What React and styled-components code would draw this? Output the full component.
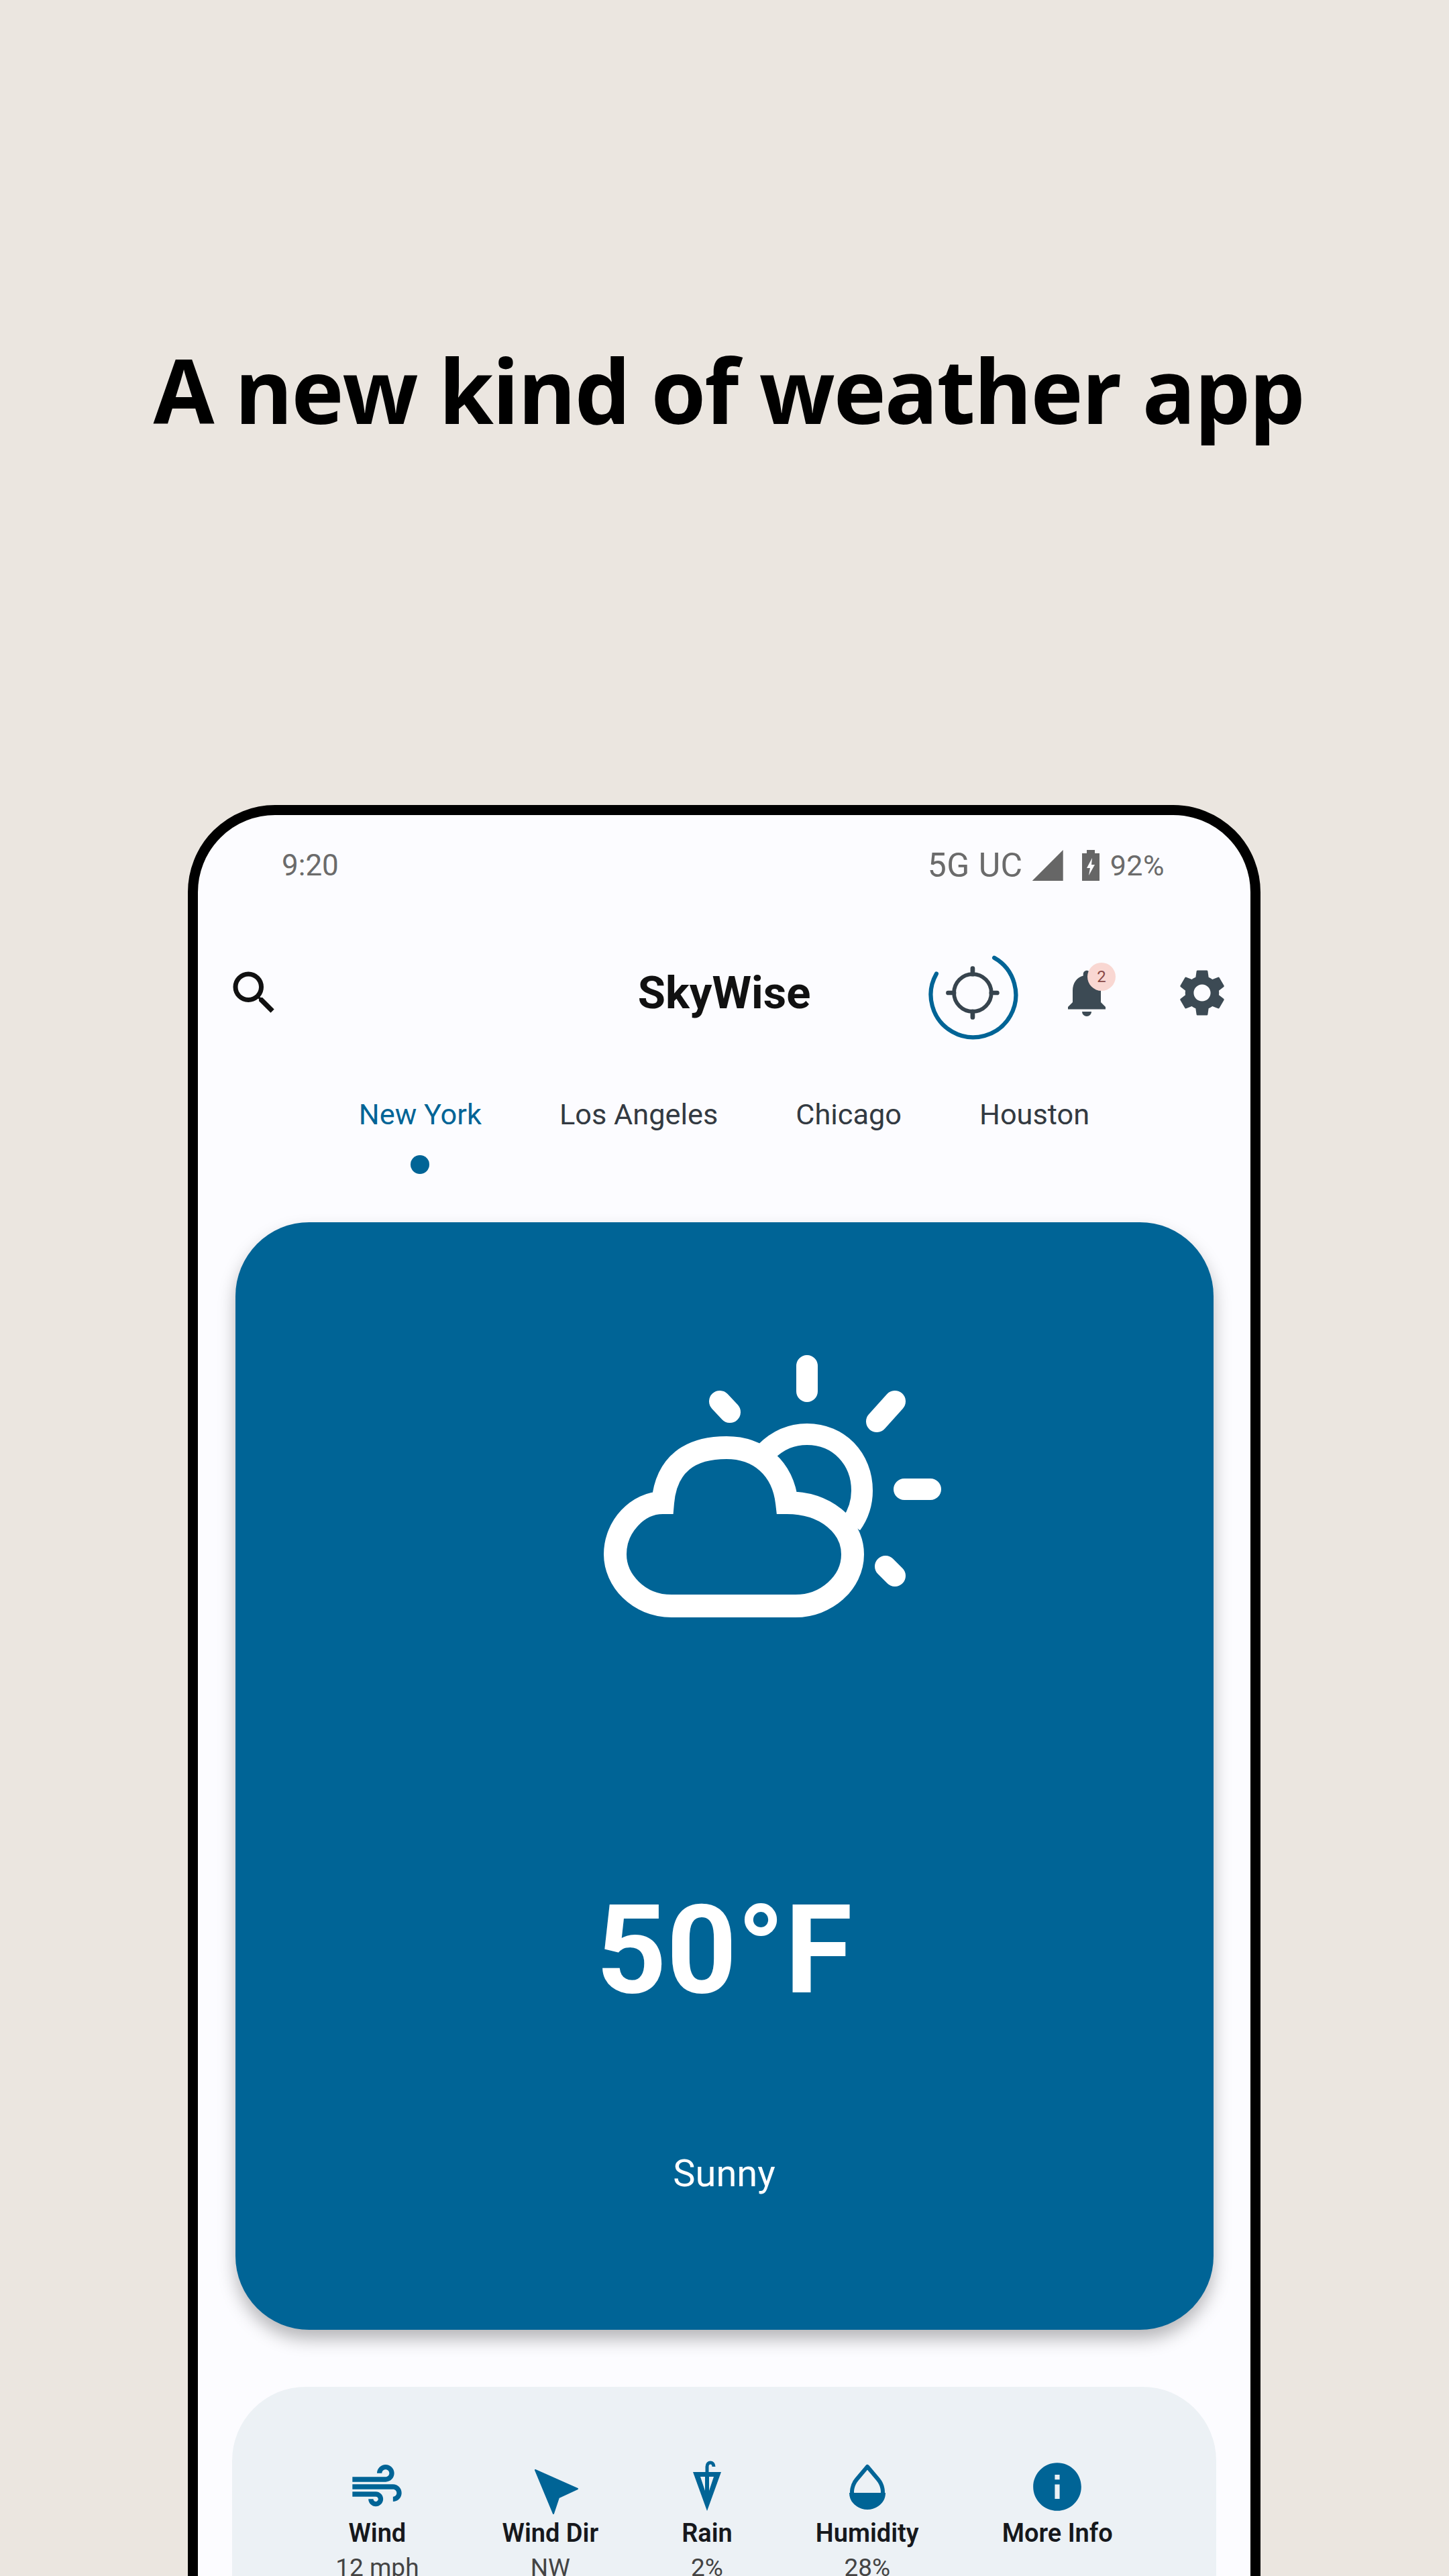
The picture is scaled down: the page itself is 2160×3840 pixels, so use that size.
import styled, { createGlobalStyle } from 'styled-components'
import { MdAir, MdInfo, MdNotifications, MdSearch, MdSettings } from 'react-icons/md'

const cities = ['New York', 'Los Angeles', 'Chicago', 'Houston']

const BLUE = '#006496'

const GlobalStyle = createGlobalStyle`
    html, body {
        margin: 0;
        padding: 0;
        background: #EBE6E0;
    }
`

const WindDirIcon = () => (
    <svg width="90" height="90" viewBox="0 0 90 90">
        <path d="M23 20 L86 48 L58 61 L50 85 Z" fill={BLUE} strokeLinejoin="round" stroke={BLUE} strokeWidth="2" />
    </svg>
)

const UmbrellaIcon = () => (
    <svg width="48" height="80" viewBox="0 0 48 80">
        <path d="M24 22 V10 C24 2 34 2 34 10" fill="none" stroke={BLUE} strokeWidth="5" />
        <path d="M3 18 L45 18 L24 76 Z" fill={BLUE} />
        <path d="M14 25 L21 25 L21 46 Z M27 25 L34 25 L27 46 Z" fill="#ECF1F5" />
    </svg>
)

const DropIcon = () => (
    <svg width="60" height="70" viewBox="0 0 60 70">
        <path d="M30 5 L46 24 C60 41 52 66 30 66 C8 66 0 41 14 24 Z" fill="none" stroke={BLUE} strokeWidth="6" strokeLinejoin="round" />
        <path d="M3 44 H57 C57 58 46 68 30 68 C14 68 3 58 3 44 Z" fill={BLUE} />
    </svg>
)

const BatteryIcon = () => (
    <svg width="30" height="46" viewBox="0 0 30 46">
        <path d="M9 0 H21 V5 H28 V46 H2 V5 H9 Z" fill="#666" />
        <path d="M17 12 L9 27 H14 L12 38 L21 22 H16 Z" fill="#FCFCFF" />
    </svg>
)

const SunCloud = () => (
    <svg width="640" height="480" viewBox="0 0 640 480" fill="none" stroke="#fff" strokeLinecap="round">
        <path d="M385 434 H200 C150 434 116 395 116 357 C116 315 150 280 187 280 C192 222 228 198 282 198 C330 198 366 228 372 280 C430 280 470 315 470 357 C470 400 430 434 385 434 Z" strokeWidth="34" strokeLinecap="butt" strokeLinejoin="miter" />
        <path d="M340 205 C360 185 380 178 402 178 C450 178 484 215 484 262 C484 280 478 298 468 312" strokeWidth="32" strokeLinecap="butt" />
        <path d="M402 76 V114 M272 129 L287 145 M533 129 L506 159 M547 260 H586 M519 375 L533 389" strokeWidth="32" />
    </svg>
)

const LocateRing = () => (
    <svg width="150" height="150" viewBox="0 0 150 150" fill="none">
        <path d="M20.7 45.4 A66 66 0 1 0 110.5 20.6" stroke={BLUE} strokeWidth="6.5" strokeLinecap="round" />
        <circle cx="77" cy="75" r="29" stroke="#37444E" strokeWidth="6" />
        <path d="M77 37 V46 M77 104 V113 M39 75 H48 M106 75 H115" stroke="#37444E" strokeWidth="7" strokeLinecap="round" />
    </svg>
)

const stats = [
    { icon: <MdAir size={88} color={BLUE} />, label: 'Wind', value: '12 mph' },
    { icon: <WindDirIcon />, label: 'Wind Dir', value: 'NW' },
    { icon: <UmbrellaIcon />, label: 'Rain', value: '2%' },
    { icon: <DropIcon />, label: 'Humidity', value: '28%' },
    { icon: <MdInfo size={86} color={BLUE} />, label: 'More Info' },
]

const App = () => {
    return (
        <Page>
            <GlobalStyle />
            <Heading>A new kind of weather app</Heading>
            <Phone>
                <StatusBar>
                    <Time>9:20</Time>
                    <StatusRight>
                        <Network>5G UC</Network>
                        <Signal />
                        <BatteryIcon />
                        <Percent>92%</Percent>
                    </StatusRight>
                </StatusBar>
                <TopBar>
                    <SearchSlot>
                        <MdSearch size={84} color="#111" />
                    </SearchSlot>
                    <Title>SkyWise</Title>
                    <Actions>
                        <ActionButton><LocateRing /></ActionButton>
                        <ActionButton>
                            <MdNotifications size={84} color="#3C4A54" />
                            <Badge>2</Badge>
                        </ActionButton>
                        <ActionButton><MdSettings size={84} color="#3C4A54" /></ActionButton>
                    </Actions>
                </TopBar>
                <Tabs>
                    {cities.map((city, i) => (
                        <Tab key={city} $active={i === 0}>{city}</Tab>
                    ))}
                </Tabs>
                <WeatherCard>
                    <WeatherIcon><SunCloud /></WeatherIcon>
                    <Temp>50°F</Temp>
                    <Condition>Sunny</Condition>
                </WeatherCard>
                <StatsPanel>
                    {stats.map((s) => (
                        <Stat key={s.label}>
                            <StatIcon>{s.icon}</StatIcon>
                            <StatLabel>{s.label}</StatLabel>
                            <StatValue>{s.value}</StatValue>
                        </Stat>
                    ))}
                </StatsPanel>
            </Phone>
        </Page>
    )
}

export default App

const Page = styled.div`
    height: 3840px;
    overflow: hidden;
    padding-top: 501px;
    box-sizing: border-box;
    background: #EBE6E0;
`

const Heading = styled.h1`
    margin: 0;
    font: 700 132px/160px "Open Sans", sans-serif;
    letter-spacing: -2px;
    color: #000;
    text-align: center;
    padding-left: 12px;
`

const Phone = styled.div`
    box-sizing: border-box;
    width: 1599px;
    height: 2800px;
    margin: 539px 0 0 280px;
    background: #FCFCFF;
    border: 15px solid #000;
    border-radius: 130px;
    font-family: Roboto, sans-serif;
`

const StatusBar = styled.div`
    height: 150px;
    padding: 0 128px 0 125px;
    display: flex;
    align-items: center;
    justify-content: space-between;
    color: #6B6B6B;
`

const Time = styled.span`
    font-size: 44px;
`

const StatusRight = styled.div`
    display: flex;
    align-items: center;
`

const Network = styled.span`
    font-size: 50px;
    letter-spacing: 0.5px;
    margin-right: 14px;
`

const Signal = styled.span`
    width: 46px;
    height: 46px;
    background: #666;
    clip-path: polygon(100% 0, 100% 100%, 0 100%);
    margin-right: 26px;
`

const Percent = styled.span`
    font-size: 43px;
    margin-left: 14px;
    letter-spacing: 0.5px;
`

const TopBar = styled.div`
    height: 230px;
    display: grid;
    grid-template-columns: 1fr auto 1fr;
    align-items: center;
`

const SearchSlot = styled.div`
    padding-left: 42px;
    display: flex;
`

const Title = styled.div`
    font-size: 67px;
    font-weight: 700;
    color: #111;
`

const Actions = styled.div`
    display: flex;
    justify-content: flex-end;
    gap: 28px;
`

const ActionButton = styled.div`
    position: relative;
    width: 144px;
    height: 150px;
    display: flex;
    align-items: center;
    justify-content: center;
`

const Badge = styled.span`
    position: absolute;
    top: 30px;
    left: 73px;
    width: 42px;
    height: 42px;
    border-radius: 50%;
    background: #F9D7D2;
    color: #8A4A48;
    font-size: 24px;
    line-height: 42px;
    text-align: center;
`

const Tabs = styled.div`
    display: flex;
    justify-content: center;
    gap: 116px;
    height: 227px;
    padding-top: 40px;
    box-sizing: border-box;
`

const Tab = styled.div`
    position: relative;
    font-size: 43.3px;
    line-height: 54px;
    color: ${(p) => (p.$active ? BLUE : '#333A42')};
    ${(p) => p.$active && `
        &::after {
            content: '';
            position: absolute;
            top: 87px;
            left: 50%;
            width: 28px;
            height: 28px;
            margin-left: -14px;
            border-radius: 50%;
            background: ${BLUE};
        }
    `}
`

const WeatherCard = styled.div`
    box-sizing: border-box;
    width: 1458px;
    height: 1651px;
    margin: 0 auto;
    padding-top: 138px;
    border-radius: 110px;
    background: ${BLUE};
    box-shadow: 0 14px 26px rgba(0, 0, 0, 0.28);
    color: #fff;
    display: flex;
    flex-direction: column;
    align-items: center;
`

const WeatherIcon = styled.div`
    margin-left: 82px;
    height: 480px;
`

const Temp = styled.div`
    margin-top: 358px;
    font-size: 183px;
    line-height: 220px;
    font-weight: 700;
`

const Condition = styled.div`
    margin-top: 187px;
    font-size: 56px;
    line-height: 70px;
`

const StatsPanel = styled.div`
    box-sizing: border-box;
    width: 1467px;
    height: 500px;
    margin: 85px auto 0;
    padding-top: 104px;
    border-radius: 110px;
    background: #ECF1F5;
    display: flex;
    justify-content: center;
    gap: 124px;
`

const Stat = styled.div`
    display: flex;
    flex-direction: column;
    align-items: center;
`

const StatIcon = styled.div`
    height: 90px;
    display: flex;
    align-items: center;
    justify-content: center;
`

const StatLabel = styled.div`
    font-size: 38px;
    line-height: 48px;
    font-weight: 600;
    color: #16181C;
`

const StatValue = styled.div`
    margin-top: 6px;
    font-size: 37px;
    line-height: 44px;
    color: #444;
`
